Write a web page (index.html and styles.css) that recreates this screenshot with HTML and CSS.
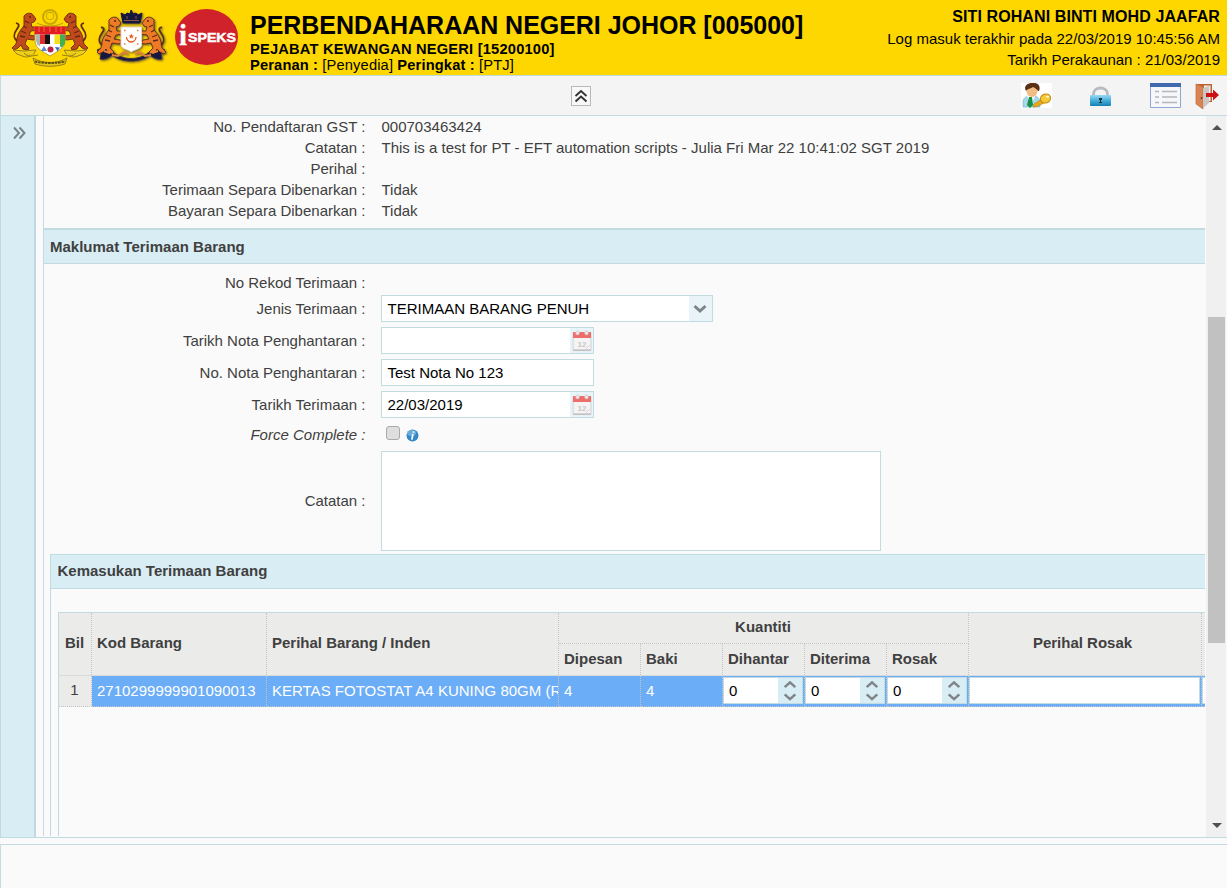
FILE: index.html
```html
<!DOCTYPE html>
<html lang="ms">
<head>
<meta charset="utf-8">
<title>iSPEKS</title>
<link rel="stylesheet" href="styles.css">
</head>
<body>
<svg class="defs" width="0" height="0" aria-hidden="true">
  <defs>
    <g id="beast">
      <path d="M12 7c2-3 7-4 9-1l3 4-2 3-3 1 1 4 6 0 0 3-7 1-2 4 6 1 2 3-4 1-6-1-2 5 4 4-1 2-5-1-2-4-3 3-4 2-2-2 4-4 1-6c1-5 4-9 7-12z"/>
      <path d="M5 32C1 29 2 24 5 20s2-5-1-6" fill="none" stroke-width="1.800"/>
      <path d="M13 12l4 2M11 17l4 2M9 22l5 2M8 27l5 1M17 8h2" fill="none" stroke-width="1.300"/>
    </g>
    <g id="calendar">
      <path d="M1 3h18v17H1z" fill="#f4f4f4" stroke="#c9c9c9" stroke-width=".8"/>
      <path d="M1 2h18v6H1z" fill="#ed6e6c"/>
      <circle cx="5.500" cy="3" r="2" fill="#f4e4e4" stroke="#c5b5b5" stroke-width=".5"/>
      <circle cx="14.500" cy="3" r="2" fill="#f4e4e4" stroke="#c5b5b5" stroke-width=".5"/>
      <text x="5.500" y="16.500" font-size="8" font-weight="bold" fill="#cbc6c6">12</text>
      <path d="M14 19l4-4" stroke="#d8d4d4"/><path d="M1 20.300h18" stroke="#c6c0c0" stroke-width="1.500"/>
    </g>
    <g id="spin">
      <path d="M6.500 9.500l5.500-5 5.500 5M6.500 17l5.500 5 5.500-5" fill="none" stroke="#7d8588" stroke-width="2.600"/>
    </g>
  </defs>
</svg>
<div class="app">
  <header class="banner">
    <div class="logos">
      <svg width="77" height="58" viewBox="0 0 77 58">
        <circle cx="38" cy="8" r="7" fill="none" stroke="#c7a800" stroke-width="2"/>
        <circle cx="38" cy="7" r="3.800" fill="#ffd700" stroke="#c7a800"/>
        <path d="M25 14c7 4 19 4 26 0" fill="none" stroke="#b99c0a"/>
        <g fill="#c04a1c" stroke="#632a12" stroke-width=".9"><use href="#beast"/><use href="#beast" transform="translate(76) scale(-1 1)"/></g>
        <path d="M23 18h30v14c0 7-7 10-15 15-8-5-15-8-15-15z" fill="#fff" stroke="#b7a135"/>
        <path d="M22.500 17.500h31v8h-31z" fill="#e21b25"/>
        <path d="M27 18v5M32 18v5M38 18v5M44 18v5M49 18v5" stroke="#f06a32"/>
        <path d="M24 25.500h4v12l-3-2-1-4z" fill="#a9b9ad"/>
        <path d="M28 25.500h5.500v9.500H28z" fill="#e12a2d"/><path d="M33 25.500h5v9.500h-5z" fill="#111"/><path d="M38 25.500h4.500v9.500H38z" fill="#fff"/><path d="M42.500 25.500H48v9.500h-5.500z" fill="#f6df1c"/><path d="M48 25.500h5v9l-3 4-2-1z" fill="#43b051"/>
        <path d="M29 42l3-5 3 5z" fill="#5688ce"/><circle cx="38.500" cy="40.500" r="3" fill="#ba2444"/><path d="M43 38l5 .500-2.500 4z" fill="#466bc0"/>
        <path d="M1 41l11 1 12-1-3 5c-7 4-10 1-16-1zM75 41l-11 1-12-1 3 5c7 4 10 1 16-1z" fill="#eed01a" stroke="#988016"/>
        <path d="M12 44c3 4 9 3 14 2M64 44c-3 4-9 3-14 2M21 49c10 6 24 6 34 0l-2 6c-10 3-20 3-30 0z" fill="#e5c71b" stroke="#988016"/>
        <path d="M23 52.500c8 2 22 2 30 0" fill="none" stroke="#5f5214" stroke-width="2" stroke-dasharray="2.500 .8"/>
      </svg>
      <svg class="johor" width="74" height="55" viewBox="0 0 74 55">
        <path d="M2 40c6-3 11-2 15 1 9 10 29 10 38 0 4-3 9-4 15-1l-4 4 1 5c-5 1-9-1-12-4-10 8-28 8-38 0-3 3-7 5-12 4l1-5z" fill="#17163f" stroke="#3b3145"/>
        <g fill="#ee7a28" stroke="#5a2e19" stroke-width=".9"><use href="#beast" x="2" y="3"/><use href="#beast" transform="translate(71 3) scale(-1 1)"/></g>
        <path d="M26 3l4 2 2-2 3 1 1-4 2 4 3-1 2 2 4-2-2 10H28z" fill="#17163f" stroke="#17163f"/>
        <path d="M29 10.500h15M32 6v3M41 6v3" stroke="#8a5a48"/>
        <path d="M26 17h20.500v18c0 4-6 4-10.200 7C32 39 26 39 26 35z" fill="#fff" stroke="#e3d3c6"/>
        <path d="M31.500 27c0 7 9.500 7 9.500 0 0 3-2 4.600-4.700 4.600S31.500 30 31.500 27z" fill="#e65c1a" stroke="#e65c1a" stroke-width=".9"/>
        <path d="M36.300 23.500l.8 2h2l-1.600 1.300.6 2-1.800-1.200-1.800 1.200.6-2-1.600-1.300h2z" fill="#e65c1a"/>
        <path d="M29 20.500h1.500M42 20.500h1.500M29 34h1.500M42 34h1.500" stroke="#e87c48" stroke-width="1.500"/>
        <path d="M17 45l6 1 6-4 4 2M56 45l-6 1-6-4-4 2M9 41l6 2M63 41l-6 2" fill="none" stroke="#e58438" stroke-width="2"/>
      </svg>
      <svg class="ispeks" width="63" height="56" viewBox="0 0 63 56">
        <ellipse cx="31.500" cy="28" rx="31.500" ry="28" fill="#d0222a"/>
        <text x="4" y="36" class="brand-i" textLength="8" lengthAdjust="spacingAndGlyphs">i</text>
        <text x="13" y="33" class="brand" textLength="48" lengthAdjust="spacingAndGlyphs">SPEKS</text>
      </svg>
    </div>
    <div class="titles">
      <h1>PERBENDAHARAAN NEGERI JOHOR [005000]</h1>
      <div class="office">PEJABAT KEWANGAN NEGERI [15200100]</div>
      <div class="role"><b>Peranan :</b> [Penyedia] <b>Peringkat :</b> [PTJ]</div>
    </div>
    <div class="user">
      <div class="user-name">SITI ROHANI BINTI MOHD JAAFAR</div>
      <div>Log masuk terakhir pada 22/03/2019 10:45:56 AM</div>
      <div>Tarikh Perakaunan : 21/03/2019</div>
    </div>
  </header>

  <nav class="toolbar">
    <button class="collapse" aria-label="Collapse"><svg width="18" height="18" viewBox="0 0 18 18"><path d="M3.500 9l5.500-5 5.500 5M3.500 14.500L9 9.500l5.500 5" fill="none" stroke="#333" stroke-width="1.900"/></svg></button>
    <div class="tools">
      <svg width="31" height="25" viewBox="0 0 31 25">
        <path fill="#fff" d="M0 0h31v25H0z"/>
        <path d="M2 24V18c1-4 4-5 8-5 5 0 8 1 9 5v6z" fill="#a5d9ed" stroke="#6aabc6" stroke-width=".6"/>
        <path d="M6 13l4 10 4-10z" fill="#fff"/><path d="M8 14h3l1 8-3 3-3-3z" fill="#199044"/>
        <ellipse cx="11" cy="8" rx="5.500" ry="6" fill="#f1bd83"/>
        <path d="M5 8C2 3 7 0 11 0c6-1 9 3 7 8h-1c-1-2-3-3-5-4-2 2-5 1-7 4z" fill="#5a3014"/>
        <path d="M21 16l-8 5-1 3 4-.500 8-4z" fill="#e7aa16" stroke="#b97b0b" stroke-width=".6"/>
        <ellipse cx="24.500" cy="15.500" rx="5.200" ry="4.500" fill="#f5ca38" stroke="#c58b12" transform="rotate(-20 24.500 15.500)"/><ellipse cx="26.500" cy="13.800" rx="1.800" ry="1" fill="#fff6c9"/>
      </svg>
      <svg class="lock" width="21" height="20" viewBox="0 0 21 20">
        <defs><linearGradient id="lockfill" x2="0" y2="1"><stop stop-color="#9bd8f2"/><stop offset=".5" stop-color="#45afd9"/><stop offset="1" stop-color="#167eb0"/></linearGradient></defs>
        <path d="M3.500 10V8c0-8 14-8 14 0v2" fill="none" stroke="#b7bbbe" stroke-width="2.800"/>
        <rect y="9" width="21" height="11" rx="1" fill="url(#lockfill)"/><path d="M9 12h3v2h-1v2h1v1H9v-1h1v-2H9z" fill="#13303b"/>
      </svg>
      <svg class="list" width="31" height="25" viewBox="0 0 31 25">
        <path d="M.5.5h30v24H.5z" fill="#f5f7fa" stroke="#91a6d4"/><path d="M0 0h31v4H0z" fill="#4169ae"/>
        <path d="M5 8.500h4M12 8.500h15M5 14h4M12 14h15M5 19.500h4M12 19.500h15" stroke="#b5b7b9" stroke-width="1.500"/>
      </svg>
      <svg class="exit" width="24" height="26" viewBox="0 0 24 26">
        <path d="M1 1h16v18H1z" fill="#bd6330"/><path d="M9 2.500h6.500V18H9z" fill="#eee"/>
        <path d="M1 1l7 3v22l-7-5z" fill="#d98451" stroke="#c06c3c" stroke-width=".7"/><path d="M8 5l6-2v17l-6 5z" fill="#c9c6c5"/>
        <circle cx="6.500" cy="15" r=".9" fill="#752f17"/>
        <path d="M11 10h7V6.500l6 5.500-6 5.500V14h-7z" fill="#cc1014"/>
      </svg>
    </div>
  </nav>

  <main class="body">
    <aside class="side"><svg width="14" height="14" viewBox="0 0 14 14"><path d="M2 1.500L7 7l-5 5.500M7.500 1.500l5 5.500-5 5.500" fill="none" stroke="#788489" stroke-width="2"/></svg></aside>
    <div class="content">
      <section class="info">
        <div class="line"><label>No. Pendaftaran GST :</label><span>000703463424</span></div>
        <div class="line"><label>Catatan :</label><span>This is a test for PT - EFT automation scripts - Julia Fri Mar 22 10:41:02 SGT 2019</span></div>
        <div class="line"><label>Perihal :</label></div>
        <div class="line"><label>Terimaan Separa Dibenarkan :</label><span>Tidak</span></div>
        <div class="line"><label>Bayaran Separa Dibenarkan :</label><span>Tidak</span></div>
      </section>
      <h2 class="section-title">Maklumat Terimaan Barang</h2>
      <section class="form">
        <div class="line"><label>No Rekod Terimaan :</label></div>
        <div class="row"><label>Jenis Terimaan :</label><div class="field wide"><span>TERIMAAN BARANG PENUH</span><i class="trigger"><svg width="23" height="25" viewBox="0 0 23 25"><path d="M5.500 10l5.500 5 5.500-5" fill="none" stroke="#7e8588" stroke-width="3"/></svg></i></div></div>
        <div class="row"><label>Tarikh Nota Penghantaran :</label><div class="field"><span></span><i class="trigger"><svg width="20" height="22" viewBox="0 0 20 22"><use href="#calendar"/></svg></i></div></div>
        <div class="row"><label>No. Nota Penghantaran :</label><div class="field"><span>Test Nota No 123</span></div></div>
        <div class="row"><label>Tarikh Terimaan :</label><div class="field"><span>22/03/2019</span><i class="trigger"><svg width="20" height="22" viewBox="0 0 20 22"><use href="#calendar"/></svg></i></div></div>
        <div class="row check"><label>Force Complete :</label><i class="box"></i><svg class="hint" width="13" height="13" viewBox="0 0 13 13"><circle cx="6.500" cy="6.500" r="6" fill="#3488c5"/><ellipse cx="5.500" cy="4" rx="4.500" ry="3" fill="#83bde2" opacity=".7"/><path d="M7.500 3h.2M6.800 5.500L6 10" stroke="#fff" stroke-width="1.700" stroke-linecap="round"/></svg></div>
        <div class="row note"><label>Catatan :</label><div class="area"></div></div>
      </section>
      <section class="entry">
        <h2 class="entry-title">Kemasukan Terimaan Barang</h2>
        <div class="table">
          <div class="grid head">
            <div class="cell tall center">Bil</div>
            <div class="cell tall">Kod Barang</div>
            <div class="cell tall">Perihal Barang / Inden</div>
            <div class="cell group">Kuantiti</div>
            <div class="cell tall damage">Perihal Rosak</div>
            <div class="tall"></div>
            <div class="cell sub">Dipesan</div><div class="cell sub">Baki</div><div class="cell sub">Dihantar</div><div class="cell sub">Diterima</div><div class="cell sub">Rosak</div>
          </div>
          <div class="grid data">
            <div class="cell center number">1</div>
            <div class="cell">2710299999901090013</div>
            <div class="cell">KERTAS FOTOSTAT A4 KUNING 80GM (RIM)</div>
            <div class="cell">4</div><div class="cell">4</div>
            <div class="cell edit"><div class="spinner"><span>0</span><svg width="24" height="26" viewBox="0 0 24 26"><use href="#spin"/></svg></div></div>
            <div class="cell edit"><div class="spinner"><span>0</span><svg width="24" height="26" viewBox="0 0 24 26"><use href="#spin"/></svg></div></div>
            <div class="cell edit"><div class="spinner"><span>0</span><svg width="24" height="26" viewBox="0 0 24 26"><use href="#spin"/></svg></div></div>
            <div class="cell edit"><div class="spinner"></div></div>
            <div class="cell edit last"><div class="spinner"></div></div>
          </div>
        </div>
      </section>
    </div>
    <div class="scrollbar"><i class="up"></i><i class="thumb"></i><i class="down"></i></div>
  </main>
  <footer class="footer"></footer>
</div>
</body>
</html>
```
FILE: styles.css
```css
* { box-sizing: border-box; }
body { margin: 0; overflow: hidden; background: #fafafa; color: #404040; font: 15px/21px "Liberation Sans", Arial, sans-serif; }
h1, h2 { margin: 0; }
svg { display: block; flex: none; }
i { font-style: normal; }
.defs { position: absolute; }
.app { display: flex; flex-direction: column; width: 1227px; height: 888px; }

/* Banner */
.banner { display: flex; height: 75px; background: #ffd700; color: #000; flex: none; }
.logos { display: flex; width: 250px; padding: 9px 0 0 12px; align-items: flex-start; flex: none; }
.johor { margin-left: 6px; margin-top: 1px; filter: drop-shadow(1px 1px 1px #66592b); }
.ispeks { margin-left: 6px; }
.brand { fill: #fff; font: 900 13.500px "Liberation Sans", Arial, sans-serif; stroke: #fff; stroke-width: .5px; }
.brand-i { fill: #fff; font: bold 29px "Liberation Serif", serif; stroke: #fff; stroke-width: .3px; }
.titles { flex: 1; padding-top: 10px; white-space: nowrap; }
.titles h1 { font-size: 25px; line-height: 31px; letter-spacing: -.03px; }
.office { font-size: 14.670px; letter-spacing: .2px; line-height: 16px; font-weight: bold; }
.role { font-size: 14.670px; letter-spacing: .150px; line-height: 16px; }
.user { padding: 6px 7px 0 0; text-align: right; white-space: nowrap; line-height: 21.500px; }
.user-name { font-size: 16px; letter-spacing: .1px; font-weight: bold; }

/* Toolbar */
.toolbar { display: flex; height: 41px; border: solid #c2dbe1; border-width: 1px 0 1px 1px; background: #f4f4f4; justify-content: space-between; flex: none; }
.collapse { width: 20px; height: 20px; margin: 10px 0 0 570px; padding: 0; border: 1px solid #b9b9b9; background: #f8f8f8; }
.tools { display: flex; padding-top: 7px; width: 206px; align-items: flex-start; }
.lock { margin: 3px 0 0 38px; }
.list { margin-left: 39px; }
.exit { margin: 0 0 0 14px; }

/* Main area */
.body { display: flex; height: 722px; border-bottom: 1px solid #c2dbe1; flex: none; }
.side { width: 36px; border: solid #c2d9e0; border-width: 0 2px 0 1px; background: #d9eef4; padding: 10px 0 0 11px; flex: none; }
.content { width: 1162px; height: 720px; margin: 0 1px 0 7px; border-left: 1px solid #c2dbe1; overflow: hidden; flex: none; }
.info { height: 112px; }
.line { display: flex; height: 21px; line-height: 22px; }
.line label, .row label { width: 321.500px; margin-right: 15.500px; text-align: right; flex: none; }
.line span { padding-left: .5px; }
.section-title { height: 36px; border: solid #c2dbe1; border-width: 2px 0 1px; background: #d9eef4; padding-left: 6px; font-size: 15px; line-height: 34px; }
.form { padding-top: 8px; height: 290px; }
.row { display: flex; height: 27px; margin-bottom: 5px; line-height: 28px; }
.form .line { margin-bottom: 2px; }
.field { display: flex; width: 213px; border: 1px solid #c2dbe1; background: #fff; color: #000; justify-content: space-between; line-height: 26px; padding-left: 5.500px; }
.wide { width: 332px; }
.trigger { display: flex; width: 23px; background: #e9f4f8; align-items: center; justify-content: center; }
.check { margin-bottom: 1px; font-style: italic; }
.row.check { height: 27px; line-height: 24px; }
.box { width: 14px; height: 14px; margin: 3px 0 0 5px; border: 1px solid #aaa; border-radius: 3px; background: #dedede; }
.hint { margin: 6px 0 0 6px; }
.note { height: 100px; line-height: 100px; }
.area { width: 500px; border: 1px solid #c2dbe1; background: #fff; }

/* Entry panel and table */
.entry { height: 290px; margin-left: 6px; border: solid #c2dbe1; border-width: 1px 0 0 1px; }
.entry-title { height: 34px; border-bottom: 1px solid #c2dbe1; background: #d9eef4; padding-left: 6.500px; font-size: 15px; line-height: 32px; }
.table { height: 240px; margin: 23px 0 0 7px; border: solid #c2dbe1; border-width: 1px 0 0 1px; overflow: hidden; }
.grid { display: grid; grid-template-columns: 33px 175px 292px repeat(5, 82px) 233px 3px; }
.head { grid-template-rows: 31px 31px; background: #ebebea; border-bottom: 1px solid #d9dadb; font-weight: bold; height: 63px; }
.cell { border-right: 1px dotted #c5c5c5; padding-left: 5px; overflow: hidden; white-space: nowrap; }
.tall { grid-row: span 2; line-height: 60px; }
.center { text-align: center; padding: 0 1px 0 0; }
.damage { text-align: center; padding: 0 5px 0 0; }
.group { grid-column: span 5; text-align: center; border-bottom: 1px dotted #c5c5c5; line-height: 28px; padding: 0 1px 0 0; }
.sub { line-height: 30px; }
.data { height: 31px; background: #6badf6; color: #fff; line-height: 29px; }
.data .cell { border-bottom: 1px dotted #c5c5c5; height: 31px; }
.data .number { background: #ebebea; color: #404040; line-height: 28px; }
.data .edit { padding: 1px 1px 2px 0; }
.spinner { display: flex; height: 27px; border: 1px solid #c2dbe1; background: #fff; color: #000; justify-content: space-between; line-height: 26px; padding-left: 5px; }
.spinner svg { height: 25px; background: #d9eef4; }
.data .last { border-right: 0; padding-right: 0; }
.last .spinner { padding: 0; border-right: 0; }

/* Scrollbar and footer */
.scrollbar { display: flex; flex-direction: column; width: 20px; background: #f0f0f0; align-items: center; flex: none; padding-left: 1px; }
.up, .down { width: 0; height: 0; border: solid transparent; border-width: 0 5px; }
.up { border-bottom: 5px solid #505050; margin-top: 9px; }
.thumb { width: 17px; height: 326px; margin-top: 187px; background: #c1c1c1; }
.down { border-top: 5px solid #505050; margin-top: 180px; }
.footer { height: 44px; margin-top: 6px; border: solid #c2dbe1; border-width: 1px 0 0 1px; }
```
